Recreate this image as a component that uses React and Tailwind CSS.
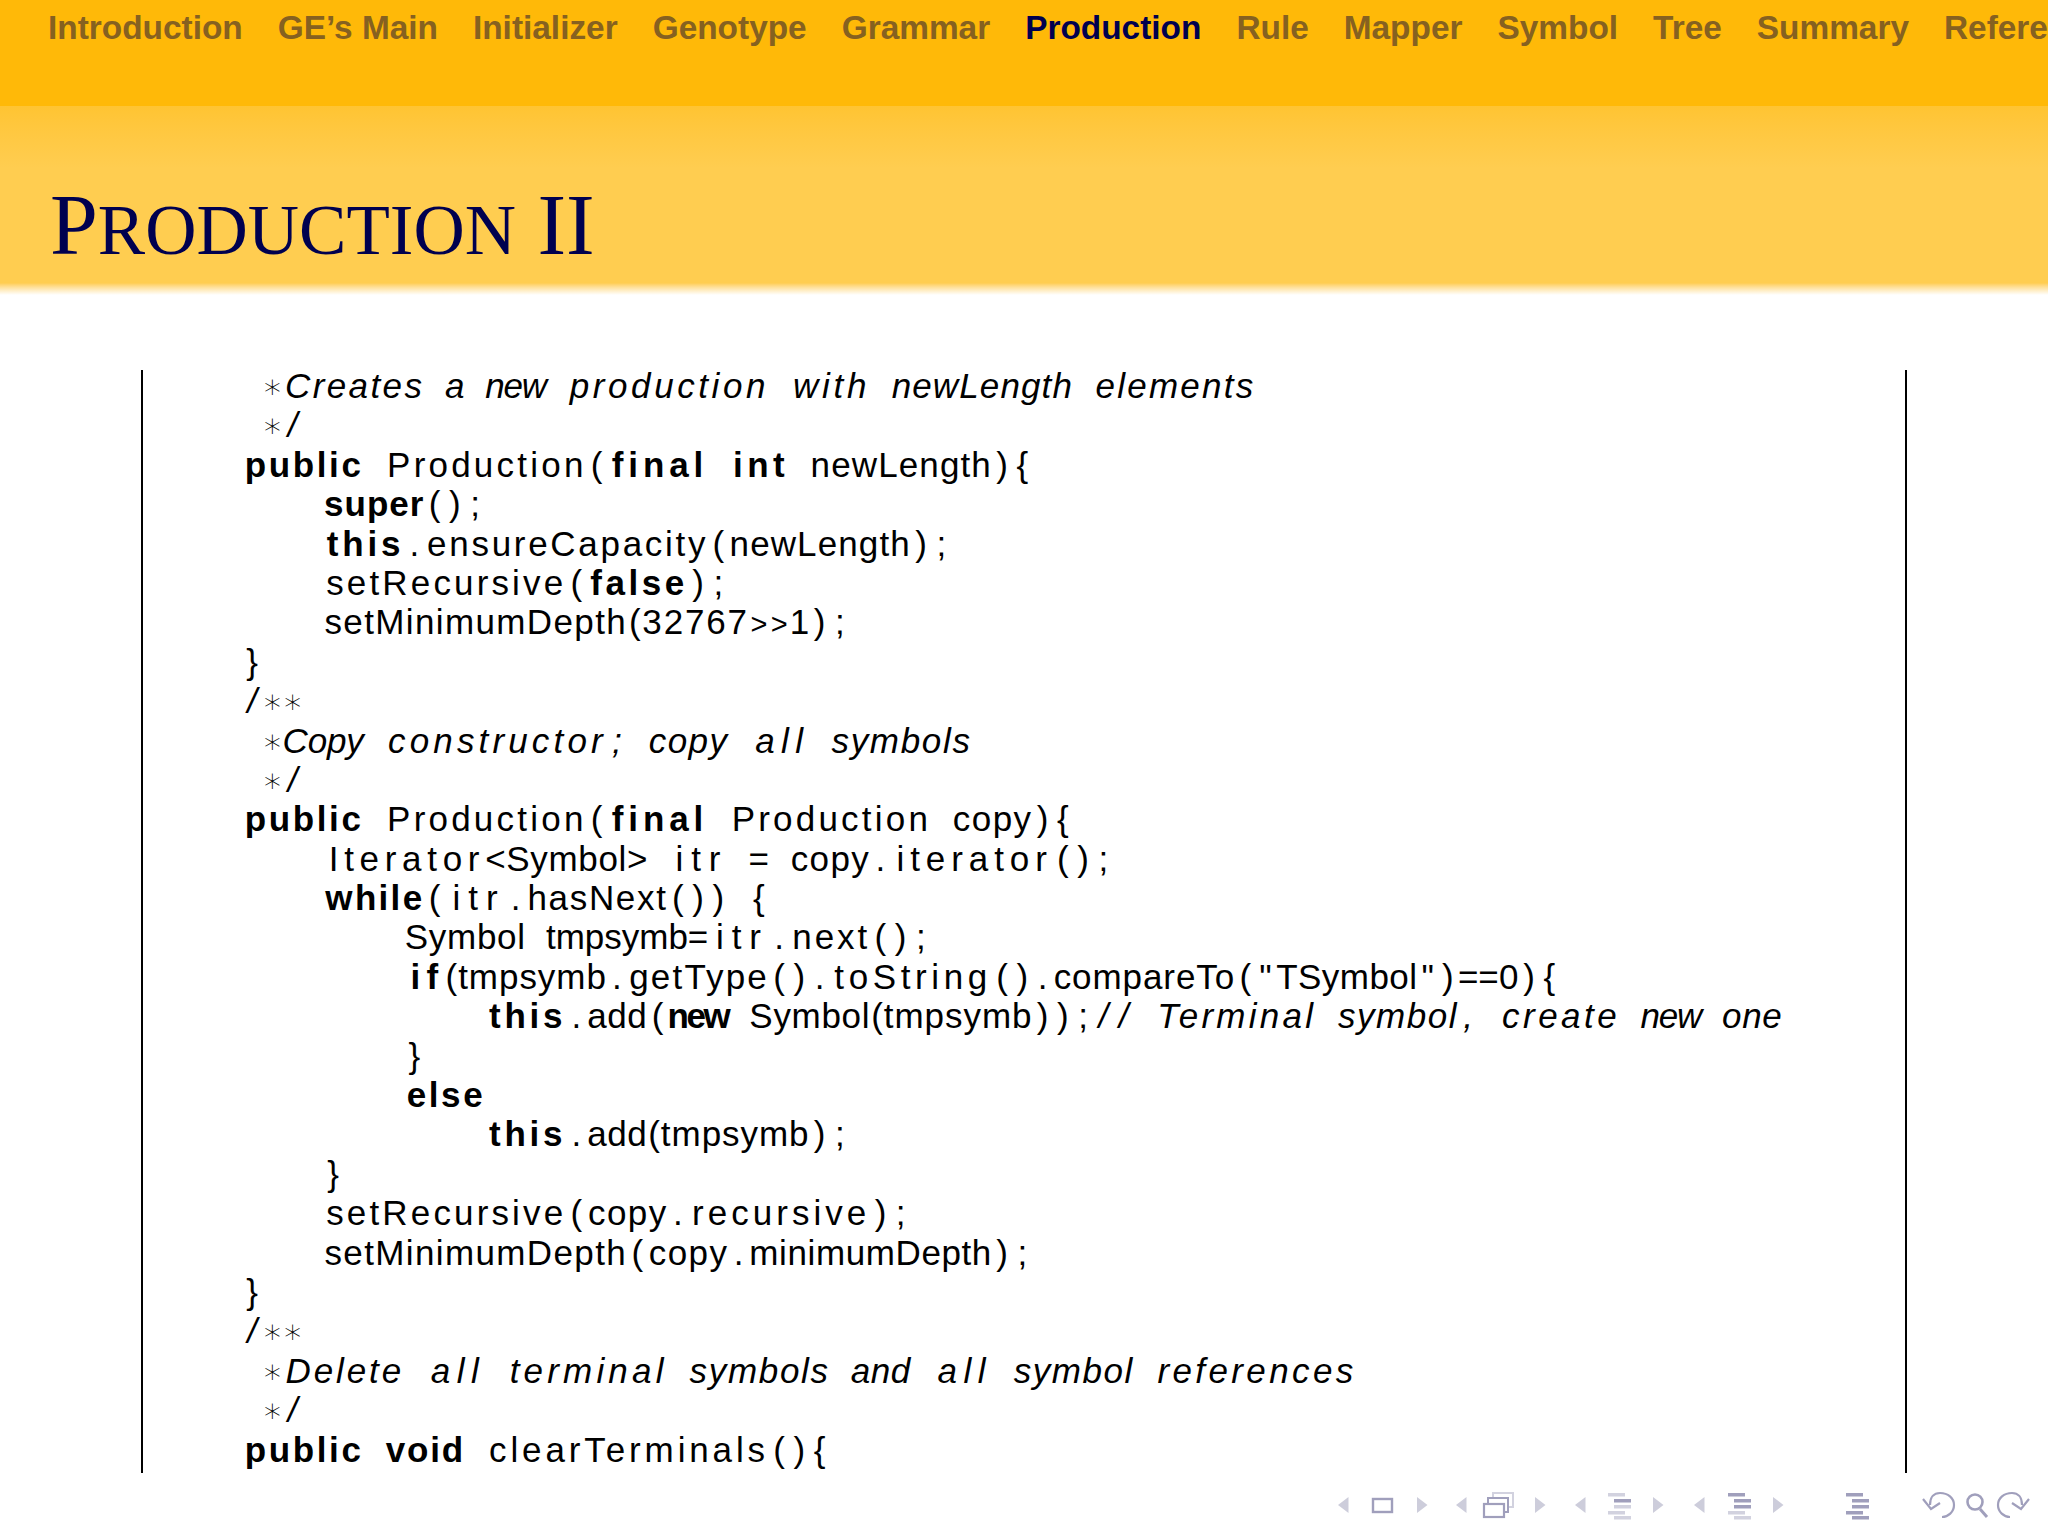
const NAV = ["Introduction","GE’s Main","Initializer","Genotype","Grammar","Production","Rule","Mapper","Symbol","Tree","Summary","References"];
const COL = 20.27;
const FONT_PX = 35;
const KEYWORDS = new Set(["public","final","int","super","this","false","new","while","if","else","void"]);
// Each line: code text, then optional comment text (rendered oblique).
const LINES = [
  [" ∗", "Creates a new production with newLength elements"],
  [" ∗", "/"],
  ["public Production(final int newLength){"],
  ["    super();"],
  ["    this.ensureCapacity(newLength);"],
  ["    setRecursive(false);"],
  ["    setMinimumDepth(32767>>1);"],
  ["}"],
  ["", "/∗∗"],
  [" ∗", "Copy constructor; copy all symbols"],
  [" ∗", "/"],
  ["public Production(final Production copy){"],
  ["    Iterator<Symbol> itr = copy.iterator();"],
  ["    while(itr.hasNext()) {"],
  ["        Symbol tmpsymb=itr.next();"],
  ["        if(tmpsymb.getType().toString().compareTo(\"TSymbol\")==0){"],
  ["            this.add(new Symbol(tmpsymb));", "// Terminal symbol, create new one"],
  ["        }"],
  ["        else"],
  ["            this.add(tmpsymb);"],
  ["    }"],
  ["    setRecursive(copy.recursive);"],
  ["    setMinimumDepth(copy.minimumDepth);"],
  ["}"],
  ["", "/∗∗"],
  [" ∗", "Delete all terminal symbols and all symbol references"],
  [" ∗", "/"],
  ["public void clearTerminals(){"],
];

let ctx = null;
function natural(text, font) {
  if (!ctx) ctx = document.createElement("canvas").getContext("2d");
  ctx.font = font;
  return ctx.measureText(text).width;
}
function Token({ text, kind }) {
  const n = text.length;
  const w = n * COL;
  const isAst = text === "∗";
  const isMath = kind === "m";
  const font = isAst
    ? `200 34px "DejaVu Sans"`
    : isMath
      ? `29px "Liberation Sans"`
      : `${kind === "i" ? "italic " : kind === "b" ? "bold " : ""}${FONT_PX}px "Liberation Sans"`;
  const nat = natural(text, font);
  let spacing, indent;
  if (nat <= w) {
    spacing = (w - nat) / (n + 1);
    indent = spacing;
  } else if (n > 1) {
    spacing = (w - nat) / n;
    indent = 0;
  } else {
    spacing = 0;
    indent = (w - nat) / 2;
  }
  const k = isAst
    ? "font-['DejaVu_Sans'] text-[34px] font-extralight not-italic"
    : isMath
      ? "text-[29px] font-normal"
      : kind === "b" ? "font-bold" : kind === "i" ? "italic" : "font-normal";
  return (
    <span className={`shrink-0 block whitespace-pre ${k}`} style={{ width: w, letterSpacing: spacing, textIndent: indent }}>
      {text}
    </span>
  );
}
function tokens(str, comment) {
  const parts = str.match(/\(tmpsymb|\(32767|[A-Za-z0-9_’]+|\s|./g) || [];
  const shift = str.includes(">>");
  return parts.map((t) => ({
    t,
    k: comment ? "i" : KEYWORDS.has(t) ? "b" : shift && t === ">" ? "m" : "n",
  }));
}

function Arrow({ x, dir, fill = "#cdcddb" }) {
  const pts = dir === "l" ? `${x + 10.5},12 ${x},20 ${x + 10.5},28` : `${x},12 ${x + 10.5},20 ${x},28`;
  return <polygon points={pts} fill={fill} />;
}
function Bars({ x, c }) {
  const rows = [[0, 8], [6, 14], [6, 20], [0, 26], [6, 31]];
  return (
    <g>
      {rows.map(([dx, y], i) => (
        <rect key={i} x={x + dx} y={y} width={17} height={3.5} fill={c[i]} />
      ))}
    </g>
  );
}
function BeamerNav() {
  const m = "#a09fbc";
  const l = "#d2d2df";
  return (
    <svg width="718" height="51" viewBox="0 0 718 51" className="block shrink-0">
      <Arrow x={8} dir="l" />
      <rect x="43" y="14" width="19" height="13" fill="none" stroke={m} strokeWidth="2.4" />
      <Arrow x={87} dir="r" />
      <Arrow x={126} dir="l" />
      <rect x="163" y="8" width="20" height="14" fill="none" stroke={l} strokeWidth="2" />
      <rect x="158" y="13" width="20" height="14" fill="#fff" stroke={m} strokeWidth="2" />
      <rect x="154" y="19" width="20" height="13" fill="#fff" stroke={m} strokeWidth="2.2" />
      <Arrow x={205} dir="r" />
      <Arrow x={245} dir="l" />
      <Bars x={278} c={[l, m, l, l, l]} />
      <Arrow x={323} dir="r" />
      <Arrow x={364} dir="l" />
      <Bars x={398} c={[m, m, m, l, l]} />
      <Arrow x={443} dir="r" />
      <Bars x={516} c={[m, m, m, m, m]} />
      <path d="M600 20 C600 12 604 8 610 8 C618 8 624 13 624 20 C624 27 618 32 612 32" fill="none" stroke={m} strokeWidth="2.2" />
      <path d="M593 14 L601 24 L610 18" fill="none" stroke={m} strokeWidth="2.2" />
      <circle cx="645" cy="17" r="7.5" fill="none" stroke={m} strokeWidth="2.6" />
      <line x1="650" y1="24" x2="657" y2="32" stroke={m} strokeWidth="3" />
      <path d="M692 20 C692 12 688 8 682 8 C674 8 668 13 668 20 C668 27 674 32 680 32" fill="none" stroke={m} strokeWidth="2.2" />
      <path d="M699 14 L691 24 L682 18" fill="none" stroke={m} strokeWidth="2.2" />
    </svg>
  );
}

export default function App() {
  return (
    <div className="w-[2048px] h-[1536px] overflow-hidden bg-white flex flex-col font-['Liberation_Sans',sans-serif]">
      <div className="h-[106px] shrink-0 bg-[#ffb908] flex gap-[35px] pl-[48px] pt-[8px] overflow-hidden">
        {NAV.map((t) => (
          <span key={t} className={`text-[33.4px] leading-[40px] font-bold whitespace-nowrap ${t === "Production" ? "text-[#00004f]" : "text-[#866120]"}`}>{t}</span>
        ))}
      </div>
      <div className="h-[177px] shrink-0 bg-gradient-to-b from-[#ffc432] to-[#ffcd50] to-[35%] flex items-start pl-[50px] pt-[83px]">
        <h1 className="font-['Liberation_Serif',serif] font-normal text-[#00004f] whitespace-nowrap leading-[72px] text-[86px]">P<span className="text-[71px]">RODUCTION</span> II</h1>
      </div>
      <div className="h-[12px] shrink-0 bg-gradient-to-b from-[#ffcd50] to-white" />
      <div className="ml-[141px] w-[1766px] h-[1103px] mt-[75px] shrink-0 border-x-2 border-black overflow-hidden">
        <div className="-mt-[4px] -ml-[141px] pl-[240px] text-[35px] leading-[39.4px] text-black">
          {LINES.map(([code, comment], i) => (
            <div key={i} className="h-[39.4px] flex items-baseline">
              {tokens(code, false).map((x, j) => <Token key={j} text={x.t} kind={x.k} />)}
              {comment ? tokens(comment, true).map((x, j) => <Token key={"c" + j} text={x.t} kind={x.k} />) : null}
            </div>
          ))}
        </div>
      </div>
      <div className="flex justify-end pt-[12px]"><BeamerNav /></div>
    </div>
  );
}
